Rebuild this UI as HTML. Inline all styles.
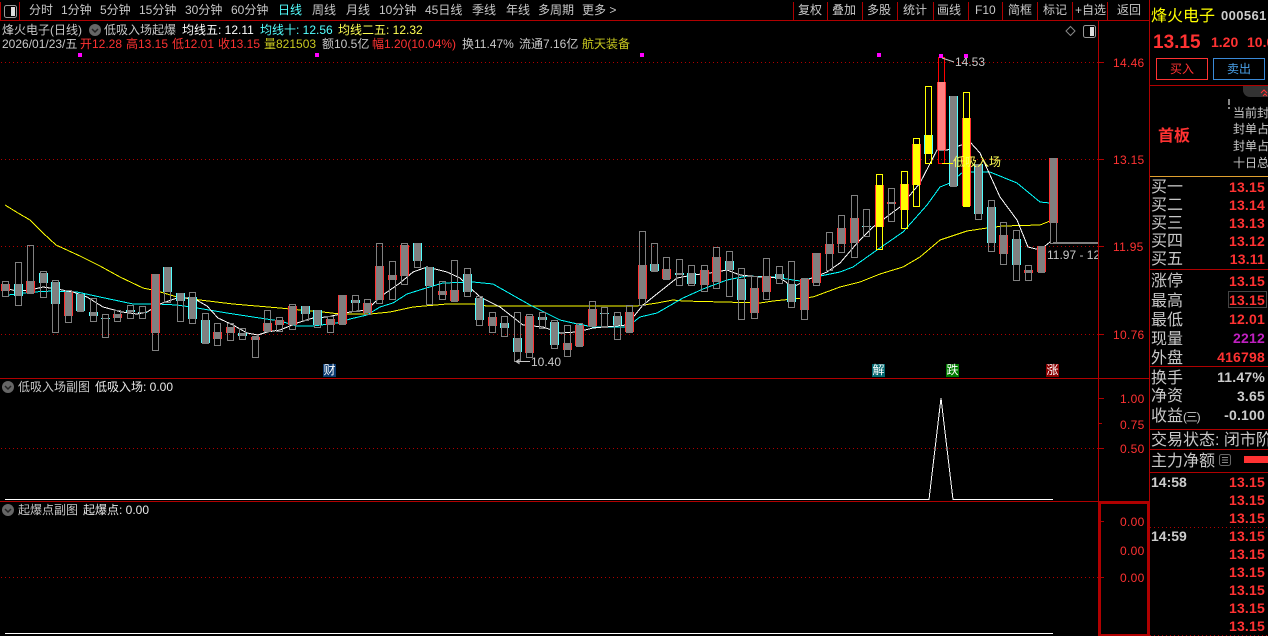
<!DOCTYPE html>
<html lang="zh"><head><meta charset="utf-8"><title>烽火电子</title>
<style>
html,body{margin:0;padding:0;background:#000;overflow:hidden}
#p{position:relative;width:1268px;height:636px;background:#000;overflow:hidden;font:12px/14px "Liberation Sans","WenQuanYi Zen Hei","Noto Sans CJK SC",sans-serif;color:#c8c8c8}
#p span.t,#p b.t{position:absolute;white-space:nowrap}
.h{position:absolute;background:#b00000}
.a{color:#ff3232}
.ax{letter-spacing:.3px}
.l{font-size:16px;line-height:18px;color:#c8c8c8;left:1151px}
.v{font-size:14px;line-height:16px;font-weight:bold;color:#ff3232;right:3px;letter-spacing:.2px}
.g{color:#c8c8c8}
.tm{font-size:14px;line-height:16px;font-weight:bold;color:#ccc;left:1151px}
.mk{width:13px;height:13px;line-height:13px;text-align:center;color:#fff;font-size:12px}
svg{position:absolute;left:0;top:0}
svg .w{width:6px;fill:none;stroke:#808080;shape-rendering:crispEdges}
svg .wy{width:6px;fill:none;stroke:#ffff00;shape-rendering:crispEdges}
svg .wr{width:6px;fill:none;stroke:#ff0000;shape-rendering:crispEdges}
svg .r,svg .c,svg .yr,svg .yc,svg .pk{width:9px;shape-rendering:crispEdges}
svg .r{fill:url(#gr)}svg .c{fill:url(#gc)}svg .yr{fill:url(#gyr)}svg .yc{fill:url(#gyc)}svg .pk{fill:url(#gp)}
svg .m{fill:#ff00ff;width:4px;height:4px}
</style></head><body><div id="p">
<svg width="1268" height="636" viewBox="0 0 1268 636">
<defs>
<linearGradient id="gr"><stop offset=".111" stop-color="#ff3232"/><stop offset=".111" stop-color="#808080"/><stop offset=".889" stop-color="#808080"/><stop offset=".889" stop-color="#ff3232"/></linearGradient>
<linearGradient id="gc"><stop offset=".111" stop-color="#54ffff"/><stop offset=".111" stop-color="#808080"/><stop offset=".889" stop-color="#808080"/><stop offset=".889" stop-color="#54ffff"/></linearGradient>
<linearGradient id="gyr"><stop offset=".111" stop-color="#ff3232"/><stop offset=".111" stop-color="#ffff00"/><stop offset=".889" stop-color="#ffff00"/><stop offset=".889" stop-color="#ff3232"/></linearGradient>
<linearGradient id="gyc"><stop offset=".111" stop-color="#54ffff"/><stop offset=".111" stop-color="#ffff00"/><stop offset=".889" stop-color="#ffff00"/><stop offset=".889" stop-color="#54ffff"/></linearGradient>
<linearGradient id="gp"><stop offset=".111" stop-color="#ff3232"/><stop offset=".111" stop-color="#ff8080"/><stop offset=".889" stop-color="#ff8080"/><stop offset=".889" stop-color="#ff3232"/></linearGradient>
</defs>
<g stroke="#b00000" stroke-dasharray="1 3" fill="none" shape-rendering="crispEdges">
<path d="M1 62.5H1098M1 159.5H1098M1 246.5H1098M1 334.5H1098M1 448.5H1098M1 577.5H1098"/>
<path d="M1150 527.5H1268M1150 635.5H1268"/>
</g>
<g fill="none" stroke-width="1" shape-rendering="crispEdges">
<polyline stroke="#ffff00" points="5,205 18,213 30,220 43,233 56,245 80,256 100,266 120,277 143,288 157,291 177,297 200,300 233,304 280,308 300,310 323,312 340,314 370,314 390,312 413,307 447,304 473,304 487,306 560,306 637,306 657,303 673,300 683,301 723,302 760,303 773,301 793,299 813,297 840,287 860,282 880,274 903,267 920,257 940,240 967,231 987,228 1003,226 1040,225 1050,221"/>
<polyline stroke="#00ffff" points="8,295 33,292 53,291 77,292 100,297 133,304 157,304 177,305 197,308 227,313 253,317 280,321 297,326 313,326 337,323 350,319 367,315 380,307 393,303 407,294 423,289 443,283 473,282 493,284 530,305 560,320 573,323 593,327 627,327 640,317 657,313 683,298 703,289 727,280 747,276 773,277 800,281 820,276 840,272 853,267 877,250 903,232 927,205 940,187 950,183 963,172 990,172 1017,183 1040,202 1050,203"/>
<polyline stroke="#ffffff" points="8,289 17,291 30,290 43,287 57,289 73,292 87,297 103,307 122,312 137,314 147,312 160,304 177,298 193,298 207,306 218,318 233,325 247,333 258,335 267,332 280,330 297,323 313,318 327,317 350,312 367,310 380,297 400,283 413,272 427,267 447,272 460,278 480,297 500,307 523,325 543,327 560,333 577,332 593,328 627,325 643,305 677,278 693,275 710,273 727,270 740,275 760,277 780,278 793,287 807,280 827,272 840,263 858,242 873,227 900,207 920,183 937,150 947,150 970,142 980,153 1000,197 1017,220 1028,247 1040,250 1050,242"/>
</g>
<rect class="w" x="2.5" y="281.5" height="15"/><rect class="r" x="1" y="284" height="7"/>
<rect class="w" x="15.5" y="262.5" height="43"/><rect class="c" x="14" y="284" height="12"/>
<rect class="w" x="27.5" y="245.5" height="48"/><rect class="r" x="26" y="281" height="12"/>
<rect class="w" x="40.5" y="271.5" height="26"/><rect class="c" x="39" y="273" height="10"/>
<rect class="w" x="52.5" y="280.5" height="52"/><rect class="c" x="51" y="282" height="22"/>
<rect class="w" x="65.5" y="290.5" height="32"/><rect class="r" x="64" y="292" height="24"/>
<rect class="w" x="77.5" y="294.5" height="17"/><rect class="c" x="76" y="294" height="17"/>
<rect class="w" x="90.5" y="298.5" height="23"/><rect class="c" x="89" y="312" height="4"/>
<rect class="w" x="102.5" y="314.5" height="23"/><rect class="c" x="101" y="318" height="1"/>
<rect class="w" x="114.5" y="310.5" height="11"/><rect class="r" x="113" y="314" height="4"/>
<rect class="w" x="127.5" y="305.5" height="13"/><rect class="c" x="126" y="310" height="2"/>
<rect class="w" x="139.5" y="306.5" height="12"/><rect class="c" x="138" y="312" height="1"/>
<rect class="w" x="152.5" y="274.5" height="76"/><rect class="r" x="151" y="274" height="59"/>
<rect class="w" x="164.5" y="267.5" height="35"/><rect class="c" x="163" y="267" height="25"/>
<rect class="w" x="177.5" y="293.5" height="28"/><rect class="c" x="176" y="293" height="8"/>
<rect class="w" x="189.5" y="292.5" height="31"/><rect class="c" x="188" y="297" height="22"/>
<rect class="w" x="202.5" y="313.5" height="30"/><rect class="c" x="201" y="320" height="23"/>
<rect class="w" x="214.5" y="323.5" height="22"/><rect class="r" x="213" y="332" height="7"/>
<rect class="w" x="227.5" y="323.5" height="17"/><rect class="r" x="226" y="327" height="6"/>
<rect class="w" x="239.5" y="328.5" height="11"/><rect class="c" x="238" y="333" height="3"/>
<rect class="w" x="252.5" y="336.5" height="21"/><rect class="r" x="251" y="337" height="3"/>
<rect class="w" x="264.5" y="310.5" height="21"/><rect class="r" x="263" y="323" height="8"/>
<rect class="w" x="276.5" y="317.5" height="14"/><rect class="r" x="275" y="320" height="5"/>
<rect class="w" x="289.5" y="304.5" height="25"/><rect class="r" x="288" y="306" height="19"/>
<rect class="w" x="302.5" y="306.5" height="14"/><rect class="c" x="301" y="306" height="8"/>
<rect class="w" x="314.5" y="310.5" height="17"/><rect class="c" x="313" y="310" height="15"/>
<rect class="w" x="327.5" y="316.5" height="16"/><rect class="r" x="326" y="319" height="6"/>
<rect class="w" x="339.5" y="295.5" height="29"/><rect class="r" x="338" y="295" height="29"/>
<rect class="w" x="352.5" y="295.5" height="16"/><rect class="c" x="351" y="300" height="3"/>
<rect class="w" x="364.5" y="299.5" height="15"/><rect class="r" x="363" y="303" height="10"/>
<rect class="w" x="376.5" y="243.5" height="60"/><rect class="r" x="375" y="266" height="34"/>
<rect class="w" x="389.5" y="261.5" height="38"/><rect class="r" x="388" y="275" height="5"/>
<rect class="w" x="401.5" y="243.5" height="41"/><rect class="r" x="400" y="245" height="31"/>
<rect class="w" x="414.5" y="243.5" height="24"/><rect class="c" x="413" y="243" height="18"/>
<rect class="w" x="426.5" y="267.5" height="37"/><rect class="c" x="425" y="267" height="19"/>
<rect class="w" x="439.5" y="281.5" height="18"/><rect class="r" x="438" y="291" height="4"/>
<rect class="w" x="451.5" y="260.5" height="41"/><rect class="r" x="450" y="290" height="11"/>
<rect class="w" x="464.5" y="268.5" height="28"/><rect class="c" x="463" y="274" height="18"/>
<rect class="w" x="476.5" y="296.5" height="29"/><rect class="c" x="475" y="298" height="22"/>
<rect class="w" x="489.5" y="312.5" height="20"/><rect class="r" x="488" y="317" height="9"/>
<rect class="w" x="501.5" y="316.5" height="20"/><rect class="c" x="500" y="323" height="5"/>
<rect class="w" x="514.5" y="312.5" height="49"/><rect class="c" x="513" y="338" height="14"/>
<rect class="w" x="526.5" y="314.5" height="43"/><rect class="r" x="525" y="316" height="37"/>
<rect class="w" x="539.5" y="312.5" height="16"/><rect class="c" x="538" y="317" height="3"/>
<rect class="w" x="551.5" y="320.5" height="28"/><rect class="c" x="550" y="322" height="23"/>
<rect class="w" x="564.5" y="325.5" height="31"/><rect class="r" x="563" y="343" height="7"/>
<rect class="w" x="576.5" y="323.5" height="23"/><rect class="r" x="575" y="325" height="21"/>
<rect class="w" x="589.5" y="301.5" height="25"/><rect class="r" x="588" y="309" height="17"/>
<rect class="w" x="601.5" y="307.5" height="20"/><rect class="c" x="600" y="313" height="1"/>
<rect class="w" x="614.5" y="312.5" height="27"/><rect class="c" x="613" y="316" height="9"/>
<rect class="w" x="626.5" y="305.5" height="27"/><rect class="r" x="625" y="312" height="20"/>
<rect class="w" x="639.5" y="231.5" height="74"/><rect class="r" x="638" y="265" height="34"/>
<rect class="w" x="651.5" y="243.5" height="28"/><rect class="c" x="650" y="264" height="7"/>
<rect class="w" x="663.5" y="257.5" height="22"/><rect class="r" x="662" y="269" height="10"/>
<rect class="w" x="676.5" y="259.5" height="26"/><rect class="c" x="675" y="273" height="2"/>
<rect class="w" x="688.5" y="265.5" height="20"/><rect class="c" x="687" y="273" height="11"/>
<rect class="w" x="701.5" y="265.5" height="26"/><rect class="r" x="700" y="270" height="15"/>
<rect class="w" x="713.5" y="247.5" height="41"/><rect class="r" x="712" y="257" height="25"/>
<rect class="w" x="726.5" y="251.5" height="45"/><rect class="c" x="725" y="261" height="9"/>
<rect class="w" x="738.5" y="268.5" height="51"/><rect class="c" x="737" y="279" height="21"/>
<rect class="w" x="751.5" y="276.5" height="42"/><rect class="r" x="750" y="288" height="25"/>
<rect class="w" x="763.5" y="258.5" height="41"/><rect class="r" x="762" y="276" height="16"/>
<rect class="w" x="776.5" y="266.5" height="17"/><rect class="c" x="775" y="274" height="5"/>
<rect class="w" x="788.5" y="261.5" height="46"/><rect class="c" x="787" y="284" height="18"/>
<rect class="w" x="801.5" y="278.5" height="41"/><rect class="r" x="800" y="279" height="31"/>
<rect class="w" x="813.5" y="253.5" height="32"/><rect class="r" x="812" y="253" height="30"/>
<rect class="w" x="826.5" y="232.5" height="38"/><rect class="r" x="825" y="244" height="10"/>
<rect class="w" x="838.5" y="215.5" height="37"/><rect class="r" x="837" y="228" height="16"/>
<rect class="w" x="851.5" y="195.5" height="62"/><rect class="r" x="850" y="218" height="25"/>
<rect class="w" x="863.5" y="209.5" height="27"/><rect class="c" x="862" y="226" height="1"/>
<rect class="wy" x="876.5" y="174.5" height="75"/><rect class="yr" x="875" y="185" height="42"/>
<rect class="w" x="888.5" y="188.5" height="33"/><rect class="r" x="887" y="202" height="2"/>
<rect class="wy" x="901.5" y="171.5" height="57"/><rect class="yr" x="900" y="184" height="26"/>
<rect class="wy" x="913.5" y="138.5" height="68"/><rect class="yr" x="912" y="144" height="41"/>
<rect class="wy" x="925.5" y="86.5" height="77"/><rect class="yc" x="924" y="135" height="19"/>
<rect class="wr" x="938.5" y="57.5" height="106"/><rect class="pk" x="937" y="82" height="68"/>
<rect class="w" x="950.5" y="96.5" height="90"/><rect class="c" x="949" y="96" height="90"/>
<rect class="wy" x="963.5" y="92.5" height="114"/><rect class="yr" x="962" y="118" height="88"/>
<rect class="w" x="975.5" y="164.5" height="55"/><rect class="c" x="974" y="164" height="50"/>
<rect class="w" x="988.5" y="200.5" height="51"/><rect class="c" x="987" y="207" height="36"/>
<rect class="w" x="1000.5" y="222.5" height="42"/><rect class="r" x="999" y="235" height="19"/>
<rect class="w" x="1013.5" y="230.5" height="50"/><rect class="c" x="1012" y="239" height="26"/>
<rect class="w" x="1025.5" y="265.5" height="15"/><rect class="r" x="1024" y="270" height="3"/>
<rect class="w" x="1038.5" y="246.5" height="26"/><rect class="r" x="1037" y="246" height="26"/>
<rect class="w" x="1050.5" y="158.5" height="85"/><rect class="r" x="1049" y="158" height="65"/>
<rect x="1053" y="242" width="45" height="2" fill="#808080"/>
<rect class="m" x="78" y="53"/><rect class="m" x="315" y="53"/><rect class="m" x="640" y="53"/><rect class="m" x="877" y="53"/><rect class="m" x="939" y="54"/><rect class="m" x="964" y="54"/>
<path d="M942 58L954 62" stroke="#c8c8c8" fill="none"/>
<path d="M516 361.500H530M516 361.500l3-2v4z" stroke="#c8c8c8" fill="none"/>
<path d="M942 163.500H953" stroke="#ffff00" fill="none"/>
<path d="M5 499.500H929L941 398L953 499.500H1053" stroke="#fff" fill="none" shape-rendering="crispEdges"/>
<path d="M5 633.500H1053" stroke="#fff" fill="none" shape-rendering="crispEdges"/>
<g stroke="#b00000" fill="none" shape-rendering="crispEdges">
<path d="M1099 62.500h5M1099 159.500h5M1099 246.500h5M1099 334.500h5M1099 398.500h5M1099 423.500h3M1099 448.500h5M1099 521.500h5M1099 549.500h2M1099 577.500h5"/>
</g>
<rect x="1100" y="503" width="48" height="132" fill="none" stroke="#b00000" stroke-width="2"/>
<g fill="none">
<rect x="4.500" y="5.500" width="12" height="12" rx="2" stroke="#999"/><rect x="11" y="7" width="4" height="9" fill="#ddd"/>
<rect x="1083.500" y="25.500" width="12" height="12" rx="2" stroke="#999"/><rect x="1090" y="27" width="4" height="9" fill="#ddd"/>
<path d="M1070.500 26.500l4.500 4.500-4.500 4.500-4.500-4.500z" stroke="#888"/>
<circle cx="95" cy="30" r="6" fill="#666"/><path d="M92 29l3 3 3-3" stroke="#222" stroke-width="1.500"/>
<circle cx="8" cy="387" r="6" fill="#666"/><path d="M5 386l3 3 3-3" stroke="#222" stroke-width="1.500"/>
<circle cx="8" cy="510" r="6" fill="#666"/><path d="M5 509l3 3 3-3" stroke="#222" stroke-width="1.500"/>
<path d="M1243 86h25v11h-18a7 7 0 0 1-7-7z" fill="#333"/>
<path d="M1261 93l3-3 3 3M1263 96l2-2 2 2" stroke="#ff3232"/>
<rect x="1228" y="99" width="2" height="6" fill="#888"/><rect x="1228" y="107" width="2" height="2" fill="#888"/>
<rect x="1156.500" y="58.500" width="51" height="21" stroke="#ff3232"/>
<rect x="1213.500" y="58.500" width="51" height="21" stroke="#3a8ad8"/>
<rect x="1228.500" y="291.500" width="38" height="16" stroke="#444"/>
<rect x="1219.500" y="454.500" width="11" height="11" rx="2" stroke="#666"/><path d="M1222 457.500h6M1222 460h6M1222 462.500h6" stroke="#888"/>
<rect x="1244" y="456" width="24" height="7" fill="#ff3232"/>
</g>
</svg>
<div class="h" style="left:0;top:20px;width:1149px;height:1px"></div>
<div class="h" style="left:19px;top:2px;width:1px;height:18px"></div>
<div class="h" style="left:0;top:2px;width:1px;height:18px"></div>
<div class="h" style="left:793px;top:2px;width:1px;height:18px"></div>
<div class="h" style="left:827px;top:2px;width:1px;height:18px"></div>
<div class="h" style="left:862px;top:2px;width:1px;height:18px"></div>
<div class="h" style="left:897px;top:2px;width:1px;height:18px"></div>
<div class="h" style="left:933px;top:2px;width:1px;height:18px"></div>
<div class="h" style="left:968px;top:2px;width:1px;height:18px"></div>
<div class="h" style="left:1002px;top:2px;width:1px;height:18px"></div>
<div class="h" style="left:1037px;top:2px;width:1px;height:18px"></div>
<div class="h" style="left:1072px;top:2px;width:1px;height:18px"></div>
<div class="h" style="left:1107px;top:2px;width:1px;height:18px"></div>
<div class="h" style="left:1098px;top:21px;width:1px;height:615px"></div>
<div class="h" style="left:1149px;top:0;width:1px;height:636px"></div>
<div class="h" style="left:0;top:378px;width:1149px;height:1px"></div>
<div class="h" style="left:0;top:501px;width:1149px;height:1px"></div>
<div class="h" style="left:1150px;top:85px;width:118px;height:1px"></div>
<div class="h" style="left:1150px;top:176px;width:118px;height:1px;background:#e0a030"></div>
<div class="h" style="left:1150px;top:269px;width:118px;height:1px"></div>
<div class="h" style="left:1150px;top:366px;width:118px;height:1px"></div>
<div class="h" style="left:1150px;top:429px;width:118px;height:1px"></div>
<div class="h" style="left:1150px;top:449px;width:118px;height:1px"></div>
<div class="h" style="left:1150px;top:472px;width:118px;height:1px"></div>

<span class="t" style="left:29px;top:3px">分时</span>
<span class="t" style="left:61px;top:3px">1分钟</span>
<span class="t" style="left:100px;top:3px">5分钟</span>
<span class="t" style="left:139px;top:3px">15分钟</span>
<span class="t" style="left:185px;top:3px">30分钟</span>
<span class="t" style="left:231px;top:3px">60分钟</span>
<span class="t" style="left:278px;top:3px;color:#54ffff">日线</span>
<span class="t" style="left:312px;top:3px">周线</span>
<span class="t" style="left:346px;top:3px">月线</span>
<span class="t" style="left:379px;top:3px">10分钟</span>
<span class="t" style="left:425px;top:3px">45日线</span>
<span class="t" style="left:472px;top:3px">季线</span>
<span class="t" style="left:506px;top:3px">年线</span>
<span class="t" style="left:538px;top:3px">多周期</span>
<span class="t" style="left:582px;top:3px">更多 &gt;</span>
<span class="t" style="left:798px;top:3px">复权</span>
<span class="t" style="left:832px;top:3px">叠加</span>
<span class="t" style="left:867px;top:3px">多股</span>
<span class="t" style="left:903px;top:3px">统计</span>
<span class="t" style="left:937px;top:3px">画线</span>
<span class="t" style="left:975px;top:3px">F10</span>
<span class="t" style="left:1008px;top:3px">简框</span>
<span class="t" style="left:1043px;top:3px">标记</span>
<span class="t" style="left:1075px;top:3px">+自选</span>
<span class="t" style="left:1117px;top:3px">返回</span>

<span class="t" style="left:2px;top:23px">烽火电子(日线)</span>
<span class="t" style="left:104px;top:23px">低吸入场起爆</span>
<span class="t" style="left:182px;top:23px;color:#fff">均线五: 12.11</span>
<span class="t" style="left:260px;top:23px;color:#54ffff">均线十: 12.56</span>
<span class="t" style="left:338px;top:23px;color:#ffff54">均线二五: 12.32</span>
<span class="t" style="left:2px;top:37px">2026/01/23/五</span>
<span class="t a" style="left:80px;top:37px">开12.28</span>
<span class="t a" style="left:126px;top:37px">高13.15</span>
<span class="t a" style="left:172px;top:37px">低12.01</span>
<span class="t a" style="left:218px;top:37px">收13.15</span>
<span class="t" style="left:264px;top:37px;color:#c8c820">量821503</span>
<span class="t" style="left:322px;top:37px">额10.5亿</span>
<span class="t a" style="left:372px;top:37px">幅1.20(10.04%)</span>
<span class="t" style="left:462px;top:37px">换11.47%</span>
<span class="t" style="left:519px;top:37px">流通7.16亿</span>
<span class="t" style="left:582px;top:37px;color:#c8c820">航天装备</span>

<span class="t" style="left:955px;top:55px">14.53</span>
<span class="t" style="left:531px;top:355px">10.40</span>
<span class="t" style="left:1047px;top:248px;width:51px;overflow:hidden">11.97 - 12.32</span>
<span class="t" style="left:953px;top:155px;color:#ffff54">低吸入场</span>
<span class="t mk" style="left:323px;top:364px;background:#0a3a70">财</span>
<span class="t mk" style="left:872px;top:364px;background:#00666e">解</span>
<span class="t mk" style="left:946px;top:364px;background:#007a00">跌</span>
<span class="t mk" style="left:1046px;top:364px;background:#8a0000">涨</span>

<span class="t" style="left:18px;top:380px">低吸入场副图</span>
<span class="t" style="left:95px;top:380px;color:#e8e8e8">低吸入场: 0.00</span>
<span class="t" style="left:18px;top:503px">起爆点副图</span>
<span class="t" style="left:83px;top:503px;color:#e8e8e8">起爆点: 0.00</span>

<span class="t a ax" style="left:1113px;top:56px">14.46</span>
<span class="t a ax" style="left:1113px;top:153px">13.15</span>
<span class="t a ax" style="left:1113px;top:240px">11.95</span>
<span class="t a ax" style="left:1113px;top:328px">10.76</span>
<span class="t a ax" style="left:1120px;top:392px">1.00</span>
<span class="t a ax" style="left:1120px;top:418px">0.75</span>
<span class="t a ax" style="left:1120px;top:442px">0.50</span>
<span class="t a ax" style="left:1120px;top:515px">0.00</span>
<span class="t a ax" style="left:1120px;top:544px">0.00</span>
<span class="t a ax" style="left:1120px;top:571px">0.00</span>

<span class="t" style="left:1151px;top:8px;font-size:16px;line-height:18px;color:#ffff00">烽火电子</span>
<b class="t" style="left:1221px;top:9px;font-size:13px;color:#ccc;letter-spacing:.4px">000561</b>
<b class="t a" style="left:1153px;top:32px;font-size:19px;line-height:22px">13.15</b>
<b class="t a" style="left:1211px;top:34px;font-size:14px;line-height:16px">1.20</b>
<b class="t a" style="left:1247px;top:34px;font-size:14px;line-height:16px">10.04%</b>
<span class="t a" style="left:1170px;top:62px">买入</span>
<span class="t" style="left:1227px;top:62px;color:#4aa0e8">卖出</span>
<b class="t a" style="left:1158px;top:128px;font-size:16px;line-height:18px">首板</b>
<span class="t" style="left:1233px;top:106px">当前封</span>
<span class="t" style="left:1233px;top:122px">封单占</span>
<span class="t" style="left:1233px;top:139px">封单占</span>
<span class="t" style="left:1233px;top:156px">十日总</span>

<span class="t l" style="top:179px">买一</span><b class="t v" style="top:179px">13.15</b>
<span class="t l" style="top:197px">买二</span><b class="t v" style="top:197px">13.14</b>
<span class="t l" style="top:215px">买三</span><b class="t v" style="top:215px">13.13</b>
<span class="t l" style="top:233px">买四</span><b class="t v" style="top:233px">13.12</b>
<span class="t l" style="top:251px">买五</span><b class="t v" style="top:251px">13.11</b>
<span class="t l" style="top:273px">涨停</span><b class="t v" style="top:273px">13.15</b>
<span class="t l" style="top:293px">最高</span><b class="t v" style="top:292px">13.15</b>
<span class="t l" style="top:312px">最低</span><b class="t v" style="top:311px">12.01</b>
<span class="t l" style="top:331px">现量</span><b class="t v" style="top:330px;color:#c020c0">2212</b>
<span class="t l" style="top:350px">外盘</span><b class="t v" style="top:349px">416798</b>
<span class="t l" style="top:370px">换手</span><b class="t v g" style="top:369px;color:#ccc">11.47%</b>
<span class="t l" style="top:388px">净资</span><b class="t v g" style="top:388px;color:#ccc">3.65</b>
<span class="t l" style="top:408px">收益<span style="font-size:12px;letter-spacing:-1.2px">(三)</span></span><b class="t v g" style="top:407px;color:#ccc">-0.100</b>
<span class="t l" style="top:432px">交易状态: 闭市阶段</span>
<span class="t l" style="top:453px">主力净额</span>

<b class="t tm" style="top:474px">14:58</b>
<b class="t tm" style="top:528px">14:59</b>
<b class="t v" style="top:474px">13.15</b>
<b class="t v" style="top:492px">13.15</b>
<b class="t v" style="top:510px">13.15</b>
<b class="t v" style="top:528px">13.15</b>
<b class="t v" style="top:546px">13.15</b>
<b class="t v" style="top:564px">13.15</b>
<b class="t v" style="top:582px">13.15</b>
<b class="t v" style="top:600px">13.15</b>
<b class="t v" style="top:618px">13.15</b>
</div></body></html>
